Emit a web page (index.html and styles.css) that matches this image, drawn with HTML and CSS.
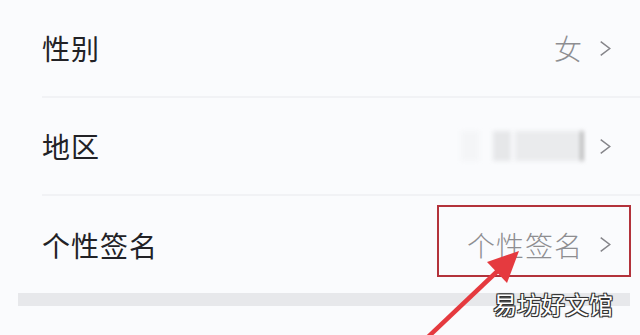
FILE: index.html
```html
<!DOCTYPE html>
<html lang="zh-CN">
<head>
    <meta charset="UTF-8">
    <meta name="viewport" content="width=device-width, initial-scale=1.0">
    <title>个人资料</title>
    <link rel="stylesheet" href="styles.css">
</head>
<body>
    <div class="page">
        <div class="list">
            <div class="row">
                <span class="label">性别</span>
                <span class="value">女<svg class="chevron" viewBox="0 0 12 16"><path d="M1.5 1.5 L10 8 L1.5 14.5"/></svg></span>
            </div>
            <div class="row">
                <span class="label">地区</span>
                <span class="value">
                    <span class="blur"><i></i><i></i><i></i></span>
                    <svg class="chevron" viewBox="0 0 12 16"><path d="M1.5 1.5 L10 8 L1.5 14.5"/></svg>
                </span>
            </div>
            <div class="row last">
                <span class="label">个性签名</span>
                <span class="value">个性签名<svg class="chevron" viewBox="0 0 12 16"><path d="M1.5 1.5 L10 8 L1.5 14.5"/></svg></span>
            </div>
        </div>
        <div class="band"></div>

        <div class="mark-box"></div>
        <svg class="arrow" viewBox="0 0 640 335">
            <line x1="428" y1="337" x2="505" y2="264"/>
            <polygon points="519,251 487,262 507,283"/>
        </svg>
        <div class="watermark">易坊好文馆</div>
    </div>
</body>
</html>
```

FILE: styles.css
```css
body {
    margin: 0;
    background-color: #fafbfd;
    font-family: "Noto Sans CJK SC", "Noto Sans", sans-serif;
}
.page {
    position: relative;
    width: 640px;
    height: 335px;
    overflow: hidden;
}
.list {
    padding-left: 42px;
}
.row {
    display: flex;
    justify-content: space-between;
    align-items: center;
    height: 96px;
    padding-right: 28px;
    border-bottom: 2px solid #f1f2f5;
}
.row.last {
    height: 97px;
    border-bottom: none;
}
.label {
    font-size: 28px;
    letter-spacing: 1px;
    color: #222226;
}
.value {
    display: flex;
    align-items: center;
    font-size: 28px;
    font-weight: 300;
    letter-spacing: 1px;
    color: #8e8e91;
}
.chevron {
    width: 13px;
    height: 17px;
    margin-left: 16px;
    fill: none;
    stroke: #85858a;
    stroke-width: 1.4;
}
.blur {
    display: flex;
    align-items: center;
    width: 122px;
    height: 32px;
    filter: blur(2px);
}
.blur i {
    display: block;
    height: 30px;
    background-color: #eaebed;
}
.blur i:nth-child(1) {
    width: 18px;
    background-color: #f4f5f7;
}
.blur i:nth-child(2) {
    width: 18px;
    margin-left: 14px;
    background-color: #e6e7e9;
}
.blur i:nth-child(3) {
    width: 66px;
    margin-left: 4px;
    border-right: 2px solid #8a8a8a;
}
.band {
    height: 13px;
    margin: 0 10px 0 18px;
    background-color: #e7e8eb;
}
.mark-box {
    position: absolute;
    left: 437px;
    top: 205px;
    width: 190px;
    height: 68px;
    border: 2px solid #b3323b;
}
.arrow {
    position: absolute;
    left: 0;
    top: 0;
    width: 640px;
    height: 335px;
}
.arrow line {
    stroke: #e53a3f;
    stroke-width: 4.5;
}
.arrow polygon {
    fill: #e53a3f;
}
.watermark {
    position: absolute;
    left: 493px;
    top: 286px;
    font-size: 24px;
    color: #fff;
    text-shadow: -1px -1px 0 #333, 1px -1px 0 #333, -1px 1px 0 #333, 1px 1px 0 #333, 0 0 2px #222;
}
```
